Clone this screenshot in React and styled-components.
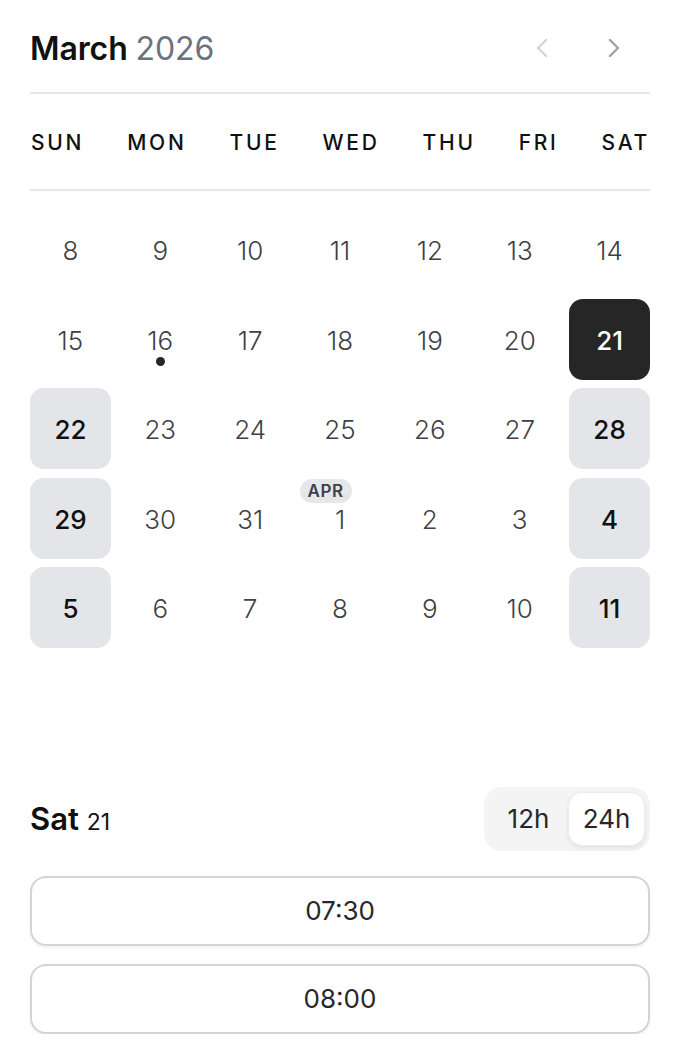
import React from 'react';
import styled, { createGlobalStyle } from 'styled-components';

const GlobalStyle = createGlobalStyle`
  html, body {
    margin: 0;
    padding: 0;
    background: #ffffff;
  }
  body {
    font-family: Inter, 'Noto Sans', sans-serif;
    color: #18181b;
  }
`;

const Page = styled.div`
  width: 620px;
  margin-left: 30px;
`;

const Header = styled.div`
  height: 94px;
  padding-top: 4px;
  display: flex;
  align-items: center;
  justify-content: space-between;
  border-bottom: 2px solid #e5e7eb;
  box-sizing: border-box;
`;

const Title = styled.h1`
  margin: 0;
  font-size: 32px;
  font-weight: 600;
  color: #111111;
  letter-spacing: -0.1px;
  span {
    font-weight: 400;
    color: #6b7280;
  }
`;

const Nav = styled.div`
  display: flex;
  gap: 40px;
  margin-right: 20px;
`;

const NavButton = styled.button`
  border: none;
  background: none;
  padding: 0;
  width: 32px;
  height: 32px;
  display: flex;
  align-items: center;
  justify-content: center;
  color: ${(p) => (p.disabled ? '#d4d4d8' : '#9ca3af')};
`;

const Weekdays = styled.div`
  height: 97px;
  display: flex;
  align-items: center;
  justify-content: space-between;
  border-bottom: 2px solid #e5e7eb;
  box-sizing: border-box;
  padding: 2px 0 0 1px;
`;

const Weekday = styled.div`
  font-size: 21px;
  font-weight: 500;
  letter-spacing: 0.13em;
  color: #111111;
`;

const Grid = styled.div`
  margin-top: 18px;
  display: grid;
  grid-template-columns: repeat(7, 1fr);
  grid-auto-rows: 81px;
  column-gap: 9px;
  row-gap: 8.6px;
`;

const Day = styled.div`
  position: relative;
  display: flex;
  align-items: center;
  justify-content: center;
  padding-top: 2px;
  border-radius: 14px;
  font-size: 26px;
  font-weight: ${(p) => (p.$variant === 'plain' ? 300 : 500)};
  color: ${(p) =>
    p.$variant === 'selected' ? '#ffffff' : p.$variant === 'weekend' ? '#111111' : '#3f3f46'};
  background: ${(p) =>
    p.$variant === 'selected' ? '#262626' : p.$variant === 'weekend' ? '#e4e5e9' : 'transparent'};
`;

const Dot = styled.span`
  position: absolute;
  left: 50%;
  top: 58px;
  width: 9px;
  height: 9px;
  margin-left: -4px;
  border-radius: 50%;
  background: #27272a;
`;

const MonthBadge = styled.span`
  position: absolute;
  left: 0;
  top: 1px;
  padding: 0 8px;
  height: 24px;
  line-height: 25px;
  border-radius: 12px;
  background: #e5e7eb;
  font-size: 17px;
  font-weight: 600;
  color: #3f3f46;
  letter-spacing: 0.03em;
`;

const TimeHeader = styled.div`
  margin-top: 49px;
  display: flex;
  align-items: center;
  justify-content: space-between;
`;

const DayLabel = styled.div`
  font-size: 31px;
  font-weight: 600;
  color: #111111;
  span {
    font-size: 23px;
    font-weight: 400;
  }
`;

const Toggle = styled.div`
  display: flex;
  padding: 5px;
  border-radius: 18px;
  background: #f4f4f5;
`;

const ToggleOption = styled.button`
  border: ${(p) => (p.$active ? '1px solid #ececef' : '1px solid transparent')};
  width: ${(p) => (p.$active ? '77px' : '79px')};
  height: 54px;
  border-radius: 14px;
  background: ${(p) => (p.$active ? '#ffffff' : 'transparent')};
  box-shadow: ${(p) => (p.$active ? '0 2px 4px rgba(0,0,0,0.08)' : 'none')};
  font-family: Inter, sans-serif;
  font-size: 26px;
  font-weight: 400;
  color: #27272a;
  padding: 0;
`;

const Slots = styled.div`
  margin-top: 25px;
  display: flex;
  flex-direction: column;
  gap: 18px;
`;

const Slot = styled.button`
  height: 70px;
  width: 100%;
  border: 2px solid #d4d4d8;
  border-radius: 16px;
  background: #ffffff;
  box-shadow: 0 2px 3px rgba(0, 0, 0, 0.05);
  font-family: Inter, sans-serif;
  font-size: 26px;
  font-weight: 400;
  color: #27272a;
`;

const Chevron = ({ dir }) => (
  <svg width="32" height="32" viewBox="0 0 24 24" fill="none" stroke="currentColor" strokeWidth="1.8" strokeLinecap="round" strokeLinejoin="round">
    <path d={dir === 'left' ? 'm15 18-6-6 6-6' : 'm9 18 6-6-6-6'} />
  </svg>
);

const weekdays = ['SUN', 'MON', 'TUE', 'WED', 'THU', 'FRI', 'SAT'];

const days = [
  8, 9, 10, 11, 12, 13, 14,
  15, 16, 17, 18, 19, 20, 21,
  22, 23, 24, 25, 26, 27, 28,
  29, 30, 31, 1, 2, 3, 4,
  5, 6, 7, 8, 9, 10, 11,
];

const variantFor = (i) => {
  if (i === 13) return 'selected';
  const col = i % 7;
  if (i > 13 && (col === 0 || col === 6)) return 'weekend';
  return 'plain';
};

const App = () => (
  <>
    <GlobalStyle />
    <Page>
      <Header>
        <Title>
          March <span>2026</span>
        </Title>
        <Nav>
          <NavButton disabled>
            <Chevron dir="left" />
          </NavButton>
          <NavButton>
            <Chevron dir="right" />
          </NavButton>
        </Nav>
      </Header>
      <Weekdays>
        {weekdays.map((d) => (
          <Weekday key={d}>{d}</Weekday>
        ))}
      </Weekdays>
      <Grid>
        {days.map((d, i) => (
          <Day key={i} $variant={variantFor(i)}>
            {i === 24 && <MonthBadge>APR</MonthBadge>}
            {d}
            {i === 8 && <Dot />}
          </Day>
        ))}
        <Day $variant="plain" />
      </Grid>
      <TimeHeader>
        <DayLabel>
          Sat <span>21</span>
        </DayLabel>
        <Toggle>
          <ToggleOption>12h</ToggleOption>
          <ToggleOption $active>24h</ToggleOption>
        </Toggle>
      </TimeHeader>
      <Slots>
        <Slot>07:30</Slot>
        <Slot>08:00</Slot>
      </Slots>
    </Page>
  </>
);

export default App;
